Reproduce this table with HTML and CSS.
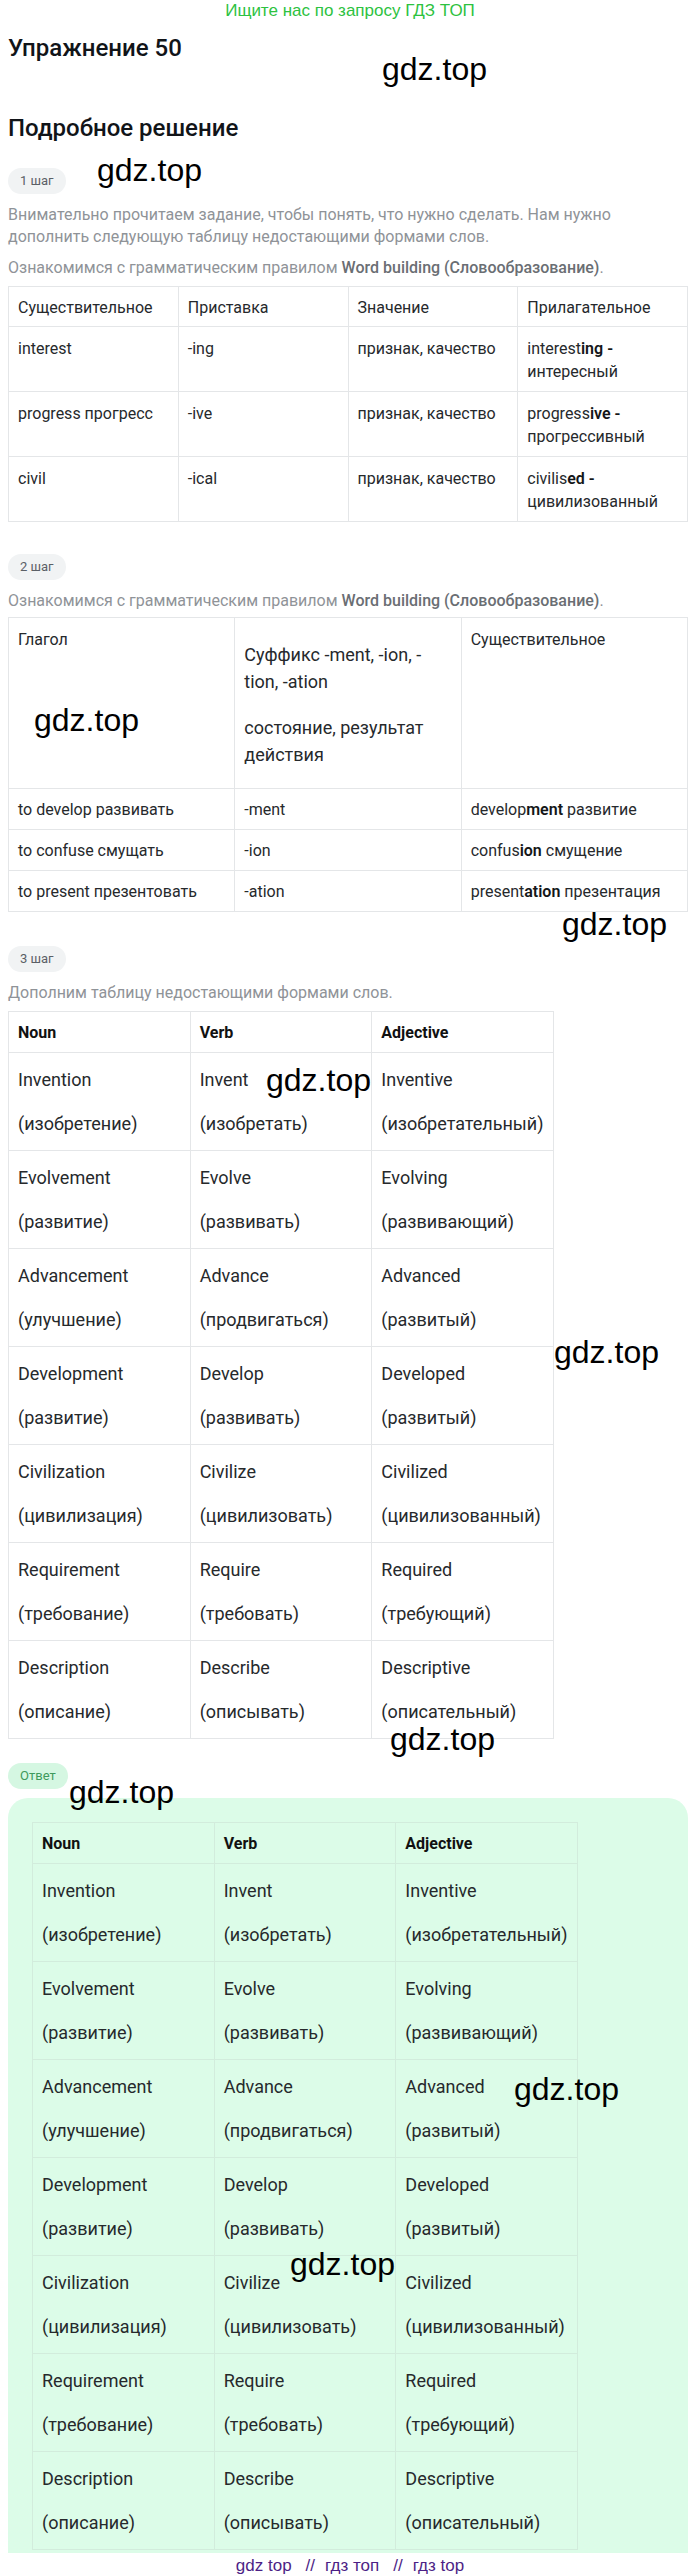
FILE: index.html
```html
<!DOCTYPE html>
<html lang="ru">
<head>
<meta charset="utf-8">
<title>Упражнение 50</title>
<link rel="stylesheet" href="styles.css">
</head>
<body>
<div class="banner">Ищите нас по запросу ГДЗ ТОП</div>
<main class="page">
  <h1 class="title">Упражнение 50</h1>
  <h2 class="subtitle">Подробное решение</h2>

  <div class="step">1 шаг</div>
  <p class="text t1">Внимательно прочитаем задание, чтобы понять, что нужно сделать. Нам нужно дополнить следующую таблицу недостающими формами слов.</p>
  <p class="text t2">Ознакомимся с грамматическим правилом <b>Word building (Словообразование)</b>.</p>
  <table class="tbl tbl4">
    <tr class="head"><td>Существительное</td><td>Приставка</td><td>Значение</td><td>Прилагательное</td></tr>
    <tr><td>interest</td><td>-ing</td><td>признак, качество</td><td>interest<b>ing -</b> интересный</td></tr>
    <tr><td>progress прогресс</td><td>-ive</td><td>признак, качество</td><td>progress<b>ive -</b> прогрессивный</td></tr>
    <tr><td>civil</td><td>-ical</td><td>признак, качество</td><td>civilis<b>ed -</b> цивилизованный</td></tr>
  </table>

  <div class="step s2">2 шаг</div>
  <p class="text t3">Ознакомимся с грамматическим правилом <b>Word building (Словообразование)</b>.</p>
  <table class="tbl tbl3">
    <tr class="head2">
      <td>Глагол</td>
      <td class="multi"><p>Суффикс -ment, -ion, -tion, -ation</p><p>состояние, результат действия</p></td>
      <td>Существительное</td>
    </tr>
    <tr><td>to develop развивать</td><td>-ment</td><td>develop<b>ment</b> развитие</td></tr>
    <tr><td>to confuse смущать</td><td>-ion</td><td>confus<b>ion</b> смущение</td></tr>
    <tr><td>to present презентовать</td><td>-ation</td><td>present<b>ation</b> презентация</td></tr>
  </table>

  <div class="step s3">3 шаг</div>
  <p class="text t4">Дополним таблицу недостающими формами слов.</p>
  <table class="tbl words">
    <tr class="whead"><td>Noun</td><td>Verb</td><td>Adjective</td></tr>
    <tr><td><p>Invention</p><p>(изобретение)</p></td><td><p>Invent</p><p>(изобретать)</p></td><td><p>Inventive</p><p>(изобретательный)</p></td></tr>
    <tr><td><p>Evolvement</p><p>(развитие)</p></td><td><p>Evolve</p><p>(развивать)</p></td><td><p>Evolving</p><p>(развивающий)</p></td></tr>
    <tr><td><p>Advancement</p><p>(улучшение)</p></td><td><p>Advance</p><p>(продвигаться)</p></td><td><p>Advanced</p><p>(развитый)</p></td></tr>
    <tr><td><p>Development</p><p>(развитие)</p></td><td><p>Develop</p><p>(развивать)</p></td><td><p>Developed</p><p>(развитый)</p></td></tr>
    <tr><td><p>Civilization</p><p>(цивилизация)</p></td><td><p>Civilize</p><p>(цивилизовать)</p></td><td><p>Civilized</p><p>(цивилизованный)</p></td></tr>
    <tr><td><p>Requirement</p><p>(требование)</p></td><td><p>Require</p><p>(требовать)</p></td><td><p>Required</p><p>(требующий)</p></td></tr>
    <tr><td><p>Description</p><p>(описание)</p></td><td><p>Describe</p><p>(описывать)</p></td><td><p>Descriptive</p><p>(описательный)</p></td></tr>
  </table>

  <div class="step answer-tag">Ответ</div>
  <section class="answer">
    <table class="tbl words ans">
      <tr class="whead"><td>Noun</td><td>Verb</td><td>Adjective</td></tr>
      <tr><td><p>Invention</p><p>(изобретение)</p></td><td><p>Invent</p><p>(изобретать)</p></td><td><p>Inventive</p><p>(изобретательный)</p></td></tr>
      <tr><td><p>Evolvement</p><p>(развитие)</p></td><td><p>Evolve</p><p>(развивать)</p></td><td><p>Evolving</p><p>(развивающий)</p></td></tr>
      <tr><td><p>Advancement</p><p>(улучшение)</p></td><td><p>Advance</p><p>(продвигаться)</p></td><td><p>Advanced</p><p>(развитый)</p></td></tr>
      <tr><td><p>Development</p><p>(развитие)</p></td><td><p>Develop</p><p>(развивать)</p></td><td><p>Developed</p><p>(развитый)</p></td></tr>
      <tr><td><p>Civilization</p><p>(цивилизация)</p></td><td><p>Civilize</p><p>(цивилизовать)</p></td><td><p>Civilized</p><p>(цивилизованный)</p></td></tr>
      <tr><td><p>Requirement</p><p>(требование)</p></td><td><p>Require</p><p>(требовать)</p></td><td><p>Required</p><p>(требующий)</p></td></tr>
      <tr><td><p>Description</p><p>(описание)</p></td><td><p>Describe</p><p>(описывать)</p></td><td><p>Descriptive</p><p>(описательный)</p></td></tr>
    </table>
  </section>
</main>
<div class="footer">gdz top<span class="sep">//</span>гдз топ<span class="sep">//</span>гдз top</div>

<span class="wm w1">gdz.top</span>
<span class="wm w2">gdz.top</span>
<span class="wm w3">gdz.top</span>
<span class="wm w4">gdz.top</span>
<span class="wm w5">gdz.top</span>
<span class="wm w6">gdz.top</span>
<span class="wm w7">gdz.top</span>
<span class="wm w8">gdz.top</span>
<span class="wm w9">gdz.top</span>
<span class="wm w10">gdz.top</span>
</body>
</html>
```

FILE: styles.css
```css
html, body {
  margin: 0;
  padding: 0;
  background: #fff;
}
body {
  position: relative;
  width: 700px;
  min-height: 2576px;
  font-family: Roboto, "Noto Sans", Arial, sans-serif;
  color: #1f2326;
}
.banner {
  height: 22px;
  line-height: 22px;
  text-align: center;
  font-family: "Liberation Sans", Arial, sans-serif;
  font-size: 17px;
  color: #2dc23f;
}
.page {
  width: 680px;
  margin: 0 0 0 8px;
  display: flex;
  flex-direction: column;
  align-items: flex-start;
}
.title {
  margin: 11px 0 0;
  font-size: 24px;
  line-height: 30px;
  font-weight: 500;
  color: #111418;
}
.subtitle {
  margin: 50px 0 0;
  font-size: 24px;
  line-height: 30px;
  font-weight: 500;
  color: #111418;
}
.step {
  margin-top: 25px;
  height: 26px;
  padding: 0 12px;
  border-radius: 13px;
  background: #f1f3f4;
  color: #5b6066;
  font-size: 13px;
  line-height: 26px;
}
.s2 { margin-top: 32px; }
.s3 { margin-top: 34px; }
.text {
  margin: 10px 0 0;
  font-size: 16px;
  line-height: 22px;
  color: #8f9398;
}
.text b {
  font-weight: 500;
  color: #6a6e73;
}
.t2 { margin-top: 9px; }

.tbl {
  border-collapse: collapse;
  table-layout: fixed;
  margin-top: 7px;
  font-size: 16px;
  color: #26292c;
}
.tbl td {
  border: 1px solid #e4e6e8;
  vertical-align: top;
  padding: 10px 9px 8px;
  line-height: 23px;
}
.tbl b { font-weight: 600; color: #141618; }

.tbl4 { width: 680px; }
.tbl4 td { width: 25%; }
.tbl4 .head td { padding: 9px 9px 7px; }

.tbl3 { width: 680px; margin-top: 5px; }
.tbl3 td { width: 33.33%; padding: 9px 9px 8px; }
.tbl3 .head2 td { padding: 10px 9px; }
.tbl3 .multi p {
  margin: 0;
  font-size: 18px;
  line-height: 27px;
}
.tbl3 .multi p:first-child { margin-top: 13px; }
.tbl3 .multi p + p { margin-top: 19px; }
.tbl3 .multi p:last-child { margin-bottom: 10px; }

.words { width: 546px; }
.words td { width: 33.33%; padding: 14px 9px 13px; }
.words td p { margin: 0; font-size: 18px; line-height: 26px; }
.words td p + p { margin-top: 18px; }
.words .whead td {
  padding: 9px 9px 8px;
  line-height: 23px;
  font-weight: 700;
  color: #111;
}
.t4 + .words { margin-top: 7px; }

.answer-tag {
  margin-top: 24px;
  background: #d5f7e2;
  color: #3f9a5c;
}
.answer {
  align-self: stretch;
  margin-top: 9px;
  padding: 24px 24px 3px;
  background: #dcfce8;
  border-radius: 20px 20px 0 0;
}
.ans { margin-top: 0; }
.ans td { border-color: #d2ecdc; }

.footer {
  margin-top: 2px;
  text-align: center;
  font-family: "Liberation Sans", Arial, sans-serif;
  font-size: 17px;
  line-height: 22px;
  color: #4d1f86;
}
.sep { margin: 0 10px 0 14px; }

.wm {
  position: absolute;
  font-family: "Liberation Sans", Arial, sans-serif;
  font-size: 32px;
  line-height: 32px;
  color: #000;
  white-space: nowrap;
}
.w1 { left: 382px; top: 53px; }
.w2 { left: 97px; top: 154px; }
.w3 { left: 34px; top: 704px; }
.w4 { left: 562px; top: 908px; }
.w5 { left: 266px; top: 1064px; }
.w6 { left: 554px; top: 1336px; }
.w7 { left: 390px; top: 1723px; }
.w8 { left: 69px; top: 1776px; }
.w9 { left: 514px; top: 2073px; }
.w10 { left: 290px; top: 2248px; }
```
